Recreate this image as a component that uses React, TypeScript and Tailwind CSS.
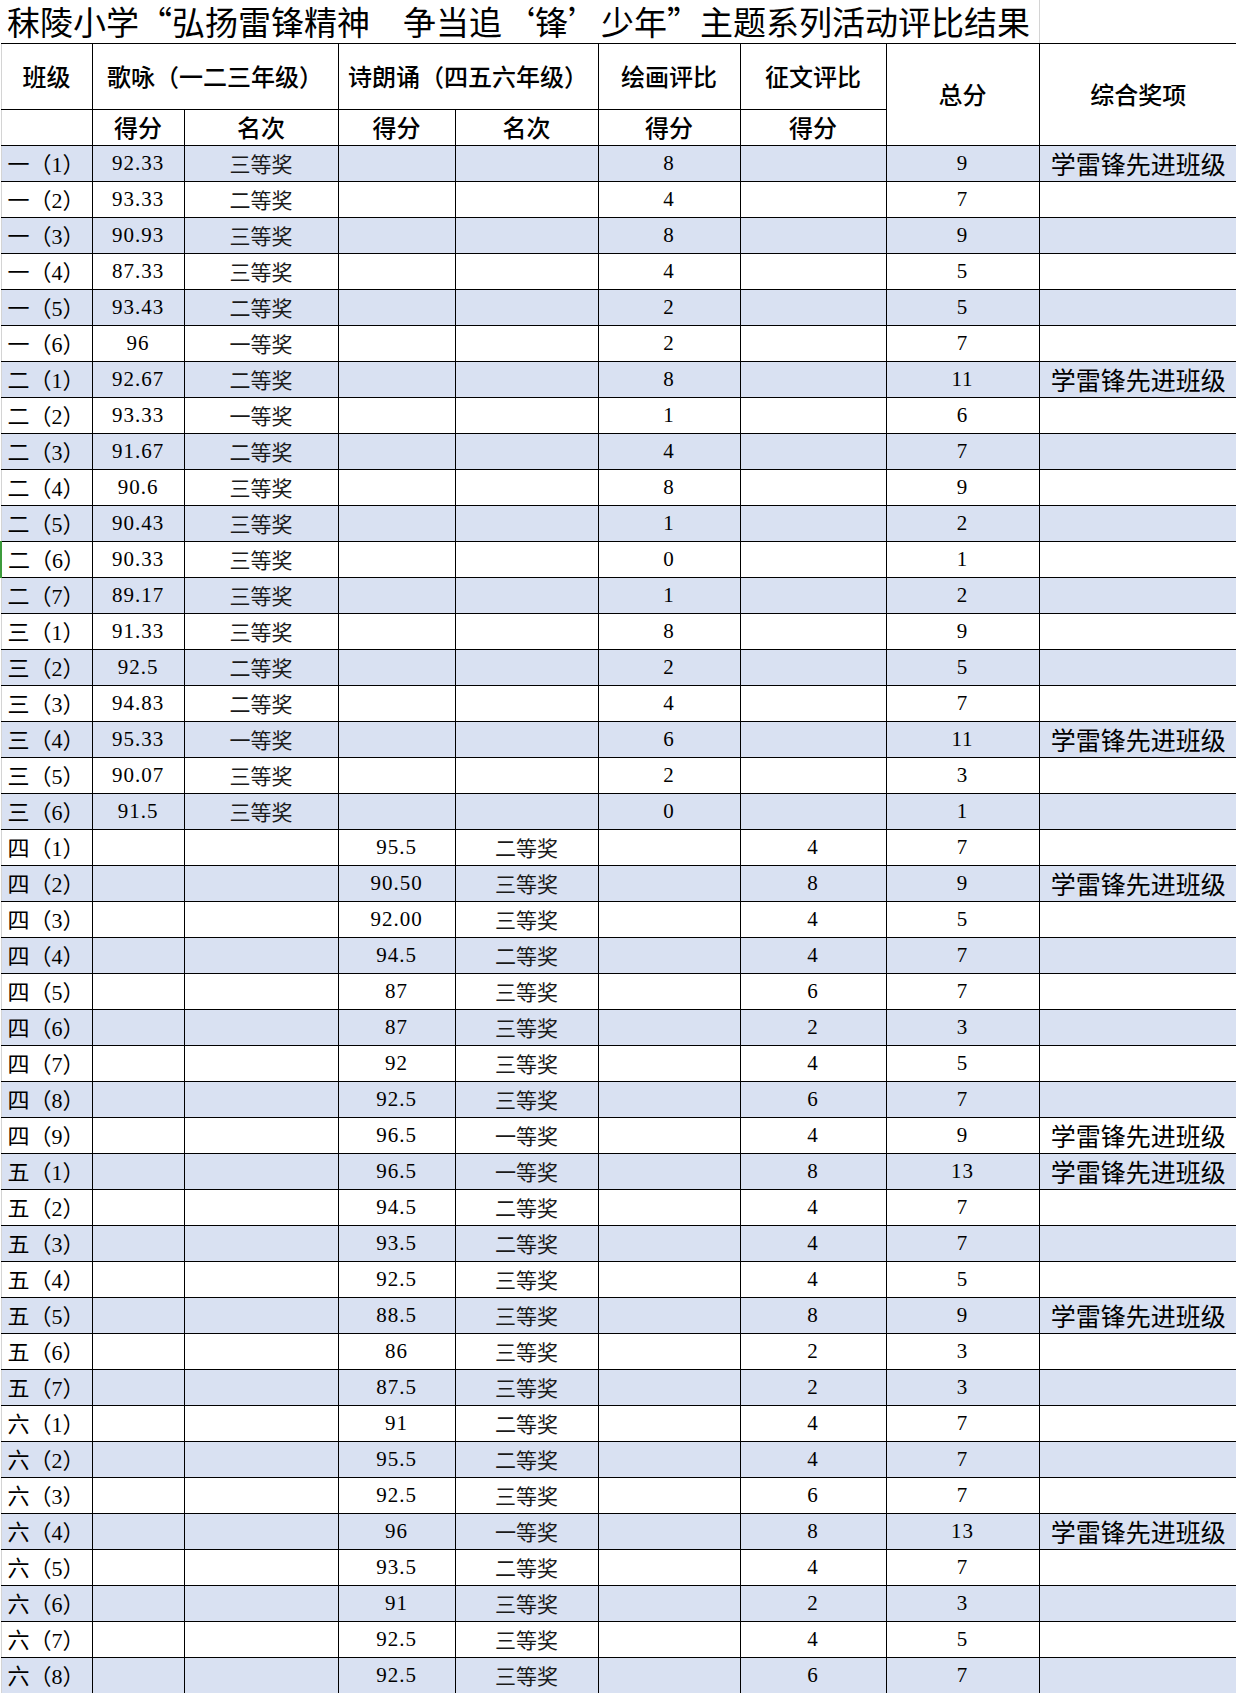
type Row = {
  cls: string;
  song?: string;
  songRank?: string;
  poem?: string;
  poemRank?: string;
  draw?: string;
  essay?: string;
  total: string;
  award?: string;
};

const AWARD = '学雷锋先进班级';

const rows: Row[] = [
  { cls: '一（1）', song: '92.33', songRank: '三等奖', draw: '8', total: '9', award: AWARD },
  { cls: '一（2）', song: '93.33', songRank: '二等奖', draw: '4', total: '7' },
  { cls: '一（3）', song: '90.93', songRank: '三等奖', draw: '8', total: '9' },
  { cls: '一（4）', song: '87.33', songRank: '三等奖', draw: '4', total: '5' },
  { cls: '一（5）', song: '93.43', songRank: '二等奖', draw: '2', total: '5' },
  { cls: '一（6）', song: '96', songRank: '一等奖', draw: '2', total: '7' },
  { cls: '二（1）', song: '92.67', songRank: '二等奖', draw: '8', total: '11', award: AWARD },
  { cls: '二（2）', song: '93.33', songRank: '一等奖', draw: '1', total: '6' },
  { cls: '二（3）', song: '91.67', songRank: '二等奖', draw: '4', total: '7' },
  { cls: '二（4）', song: '90.6', songRank: '三等奖', draw: '8', total: '9' },
  { cls: '二（5）', song: '90.43', songRank: '三等奖', draw: '1', total: '2' },
  { cls: '二（6）', song: '90.33', songRank: '三等奖', draw: '0', total: '1' },
  { cls: '二（7）', song: '89.17', songRank: '三等奖', draw: '1', total: '2' },
  { cls: '三（1）', song: '91.33', songRank: '三等奖', draw: '8', total: '9' },
  { cls: '三（2）', song: '92.5', songRank: '二等奖', draw: '2', total: '5' },
  { cls: '三（3）', song: '94.83', songRank: '二等奖', draw: '4', total: '7' },
  { cls: '三（4）', song: '95.33', songRank: '一等奖', draw: '6', total: '11', award: AWARD },
  { cls: '三（5）', song: '90.07', songRank: '三等奖', draw: '2', total: '3' },
  { cls: '三（6）', song: '91.5', songRank: '三等奖', draw: '0', total: '1' },
  { cls: '四（1）', poem: '95.5', poemRank: '二等奖', essay: '4', total: '7' },
  { cls: '四（2）', poem: '90.50', poemRank: '三等奖', essay: '8', total: '9', award: AWARD },
  { cls: '四（3）', poem: '92.00', poemRank: '三等奖', essay: '4', total: '5' },
  { cls: '四（4）', poem: '94.5', poemRank: '二等奖', essay: '4', total: '7' },
  { cls: '四（5）', poem: '87', poemRank: '三等奖', essay: '6', total: '7' },
  { cls: '四（6）', poem: '87', poemRank: '三等奖', essay: '2', total: '3' },
  { cls: '四（7）', poem: '92', poemRank: '三等奖', essay: '4', total: '5' },
  { cls: '四（8）', poem: '92.5', poemRank: '三等奖', essay: '6', total: '7' },
  { cls: '四（9）', poem: '96.5', poemRank: '一等奖', essay: '4', total: '9', award: AWARD },
  { cls: '五（1）', poem: '96.5', poemRank: '一等奖', essay: '8', total: '13', award: AWARD },
  { cls: '五（2）', poem: '94.5', poemRank: '二等奖', essay: '4', total: '7' },
  { cls: '五（3）', poem: '93.5', poemRank: '二等奖', essay: '4', total: '7' },
  { cls: '五（4）', poem: '92.5', poemRank: '三等奖', essay: '4', total: '5' },
  { cls: '五（5）', poem: '88.5', poemRank: '三等奖', essay: '8', total: '9', award: AWARD },
  { cls: '五（6）', poem: '86', poemRank: '三等奖', essay: '2', total: '3' },
  { cls: '五（7）', poem: '87.5', poemRank: '三等奖', essay: '2', total: '3' },
  { cls: '六（1）', poem: '91', poemRank: '二等奖', essay: '4', total: '7' },
  { cls: '六（2）', poem: '95.5', poemRank: '二等奖', essay: '4', total: '7' },
  { cls: '六（3）', poem: '92.5', poemRank: '三等奖', essay: '6', total: '7' },
  { cls: '六（4）', poem: '96', poemRank: '一等奖', essay: '8', total: '13', award: AWARD },
  { cls: '六（5）', poem: '93.5', poemRank: '二等奖', essay: '4', total: '7' },
  { cls: '六（6）', poem: '91', poemRank: '三等奖', essay: '2', total: '3' },
  { cls: '六（7）', poem: '92.5', poemRank: '三等奖', essay: '4', total: '5' },
  { cls: '六（8）', poem: '92.5', poemRank: '三等奖', essay: '6', total: '7' },
];

const serif = "font-['Liberation_Serif','Noto_Sans_CJK_SC',serif]";
const cjk = "font-['Noto_Sans_CJK_SC',sans-serif]";

function ClassName({ text }: { text: string }) {
  // 一（1）: grade + full-width brackets in the CJK face, digit in the serif face
  return (
    <>
      <span className={cjk}>{text.slice(0, 2)}</span>
      <span className={serif}>{text.slice(2, 3)}</span>
      <span className={cjk}>{text.slice(3)}</span>
    </>
  );
}

export default function App() {
  const cell = 'border border-black p-0 text-center align-middle';
  const head = `${cell} ${cjk} text-[24px] leading-none font-medium`;

  return (
    <div className={`w-[1236px] bg-white text-black [text-spacing-trim:space-all] ${serif}`}>
      <table className="w-[1236px] table-fixed border-collapse">
        <colgroup>
          <col className="w-[91px]" />
          <col className="w-[92px]" />
          <col className="w-[154px]" />
          <col className="w-[117px]" />
          <col className="w-[143px]" />
          <col className="w-[142px]" />
          <col className="w-[146px]" />
          <col className="w-[153px]" />
          <col className="w-[198px]" />
        </colgroup>
        <tbody>
          <tr className="h-[43px]">
            <td
              colSpan={8}
              className={`border-b border-black p-0 pl-[6px] text-left align-middle ${cjk} text-[33px] leading-none whitespace-nowrap`}
            >
              秣陵小学“弘扬雷锋精神　争当追‘锋’少年”主题系列活动评比结果
            </td>
            <td className="border-b border-l border-b-black border-l-[#d4d4d4] p-0"></td>
          </tr>
          <tr className="h-[66px]">
            <td className={`${head} border-l-[#d4d4d4]`}>班级</td>
            <td colSpan={2} className={`${head} whitespace-nowrap`}>歌咏（一二三年级）</td>
            <td colSpan={2} className={`${head} whitespace-nowrap`}>诗朗诵（四五六年级）</td>
            <td className={head}>绘画评比</td>
            <td className={head}>征文评比</td>
            <td rowSpan={2} className={head}>总分</td>
            <td rowSpan={2} className={`${head} border-r-0`}>综合奖项</td>
          </tr>
          <tr className="h-[36px]">
            <td className={`${head} border-l-[#d4d4d4]`}></td>
            <td className={head}>得分</td>
            <td className={head}>名次</td>
            <td className={head}>得分</td>
            <td className={head}>名次</td>
            <td className={head}>得分</td>
            <td className={head}>得分</td>
          </tr>
          {rows.map((r, i) => {
            const bg = i % 2 === 0 ? 'bg-[#d9e1f2]' : 'bg-white';
            const num = `${cell} text-[21px] leading-none tracking-[1px]`;
            const rank = `${cell} ${cjk} text-[21px] leading-none text-[#1a1a1a]`;
            const left = r.cls === '二（6）' ? 'border-l-2 border-l-[#3c9b3c]' : 'border-l-[#d4d4d4]';
            return (
              <tr key={r.cls} className={`h-[36px] ${bg}`}>
                <td
                  className={`border border-black ${left} p-0 pl-[6px] text-left align-middle text-[22px] leading-none whitespace-nowrap`}
                >
                  <ClassName text={r.cls} />
                </td>
                <td className={num}>{r.song}</td>
                <td className={rank}>{r.songRank}</td>
                <td className={num}>{r.poem}</td>
                <td className={rank}>{r.poemRank}</td>
                <td className={num}>{r.draw}</td>
                <td className={num}>{r.essay}</td>
                <td className={num}>{r.total}</td>
                <td className={`${cell} ${cjk} border-r-0 text-[25px] leading-none whitespace-nowrap`}>
                  {r.award}
                </td>
              </tr>
            );
          })}
        </tbody>
      </table>
    </div>
  );
}
